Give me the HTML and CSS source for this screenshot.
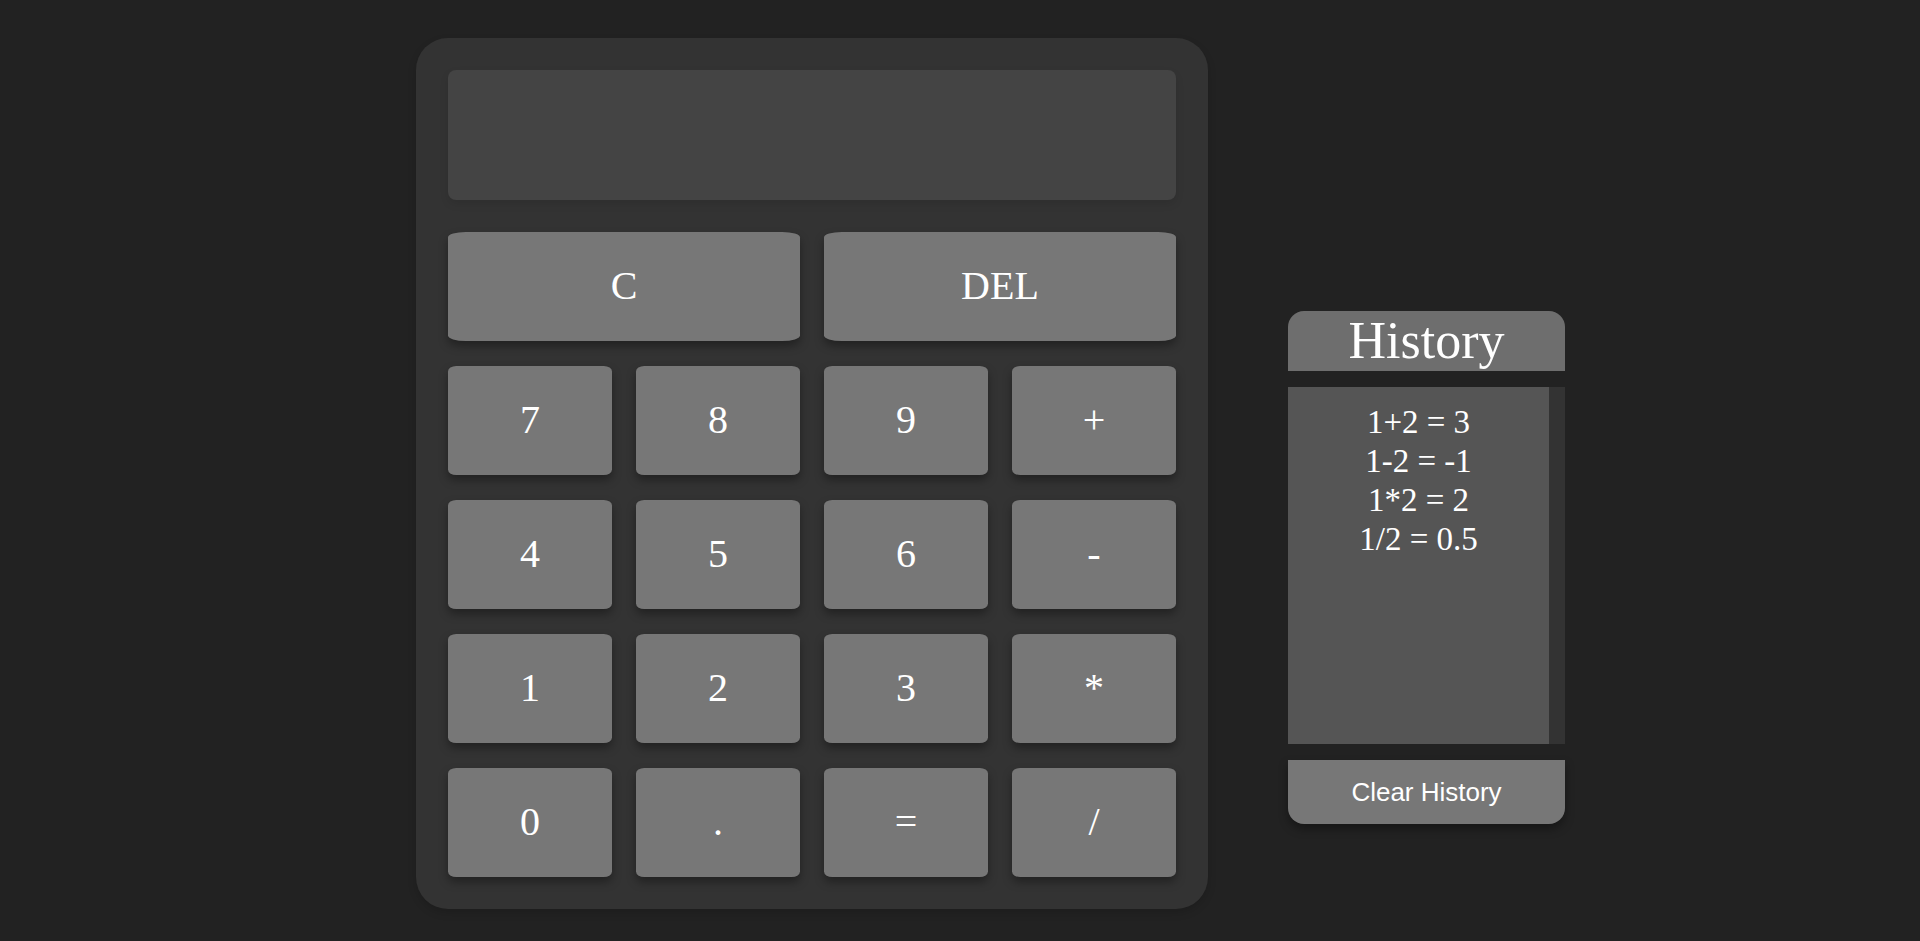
FILE: index.html
```html
<!DOCTYPE html>
<html lang="en">
<head>
  <meta charset="utf-8">
  <title>Calculator</title>
  <link rel="stylesheet" href="styles.css">
</head>
<body>
  <main class="app">
    <section class="calculator" aria-label="Calculator">
      <output class="display" aria-label="Result"></output>
      <div class="keys">
        <button class="key wide" type="button">C</button>
        <button class="key wide" type="button">DEL</button>
        <button class="key" type="button">7</button>
        <button class="key" type="button">8</button>
        <button class="key" type="button">9</button>
        <button class="key" type="button">+</button>
        <button class="key" type="button">4</button>
        <button class="key" type="button">5</button>
        <button class="key" type="button">6</button>
        <button class="key" type="button">-</button>
        <button class="key" type="button">1</button>
        <button class="key" type="button">2</button>
        <button class="key" type="button">3</button>
        <button class="key" type="button">*</button>
        <button class="key" type="button">0</button>
        <button class="key" type="button">.</button>
        <button class="key" type="button">=</button>
        <button class="key" type="button">/</button>
      </div>
    </section>
    <aside class="history">
      <h1 class="history-title">History</h1>
      <div class="history-list">
        <p class="entry">1+2 = 3</p>
        <p class="entry">1-2 = -1</p>
        <p class="entry">1*2 = 2</p>
        <p class="entry">1/2 = 0.5</p>
      </div>
      <button class="clear" type="button">Clear History</button>
    </aside>
  </main>
</body>
</html>
```
FILE: styles.css
```css
* {
  box-sizing: border-box;
}

body {
  margin: 0;
  background: #222;
  color: #fff;
  font-family: "Liberation Serif", "Times New Roman", serif;
}

.app {
  display: flex;
  justify-content: center;
  align-items: center;
  gap: 80px;
  padding: 38px 0 31px 61px;
}

.calculator {
  width: 44%;
  max-width: 792px;
  padding: 32px;
  border-radius: 32px;
  background: #333;
  box-shadow: 0 4px 8px rgba(0, 0, 0, 0.15);
}

.display {
  display: block;
  height: 130px;
  margin-bottom: 32px;
  border-radius: 8px;
  background: #444;
  box-shadow: 0 4px 8px rgba(0, 0, 0, 0.1);
}

.keys {
  display: grid;
  grid-template-columns: repeat(4, 1fr);
  grid-auto-rows: 109px;
  gap: 25px 24px;
}

.key {
  padding: 0 0 2px;
  border: 0;
  border-radius: 5%;
  background: #777;
  color: #fff;
  font-family: inherit;
  font-size: 40px;
  box-shadow: 0 5px 10px rgba(0, 0, 0, 0.35);
}

.wide {
  grid-column: span 2;
}

.history {
  display: flex;
  flex-direction: column;
  gap: 16px;
  width: 277px;
  margin-top: 188px;
}

.history-title {
  margin: 0;
  border-radius: 16px 16px 0 0;
  background: #6e6e6e;
  font-size: 52px;
  font-weight: 400;
  line-height: 60px;
  text-align: center;
}

.history-list {
  height: 357px;
  padding: 16px;
  border-right: 16px solid #333;
  background: #555;
}

.entry {
  margin: 0;
  font-size: 33px;
  line-height: 39px;
  text-align: center;
}

.clear {
  height: 64px;
  padding: 0;
  border: 0;
  border-radius: 0 0 16px 16px;
  background: #777;
  color: #fff;
  font-family: "Liberation Sans", Arial, sans-serif;
  font-size: 26px;
  box-shadow: 0 5px 10px rgba(0, 0, 0, 0.35);
}
```
